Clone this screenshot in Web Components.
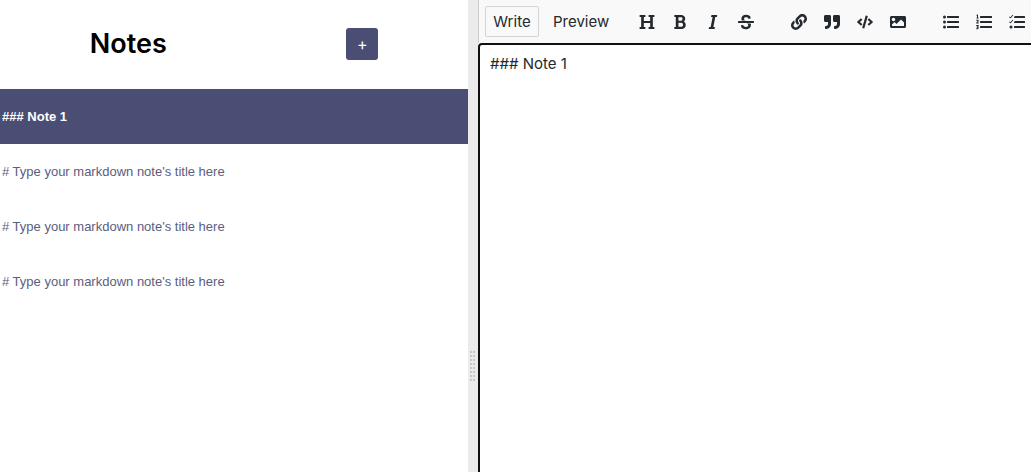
<!DOCTYPE html>
<html lang="en">
<head>
<meta charset="utf-8">
<title>Notes</title>
<style>
  html, body { height: 100%; margin: 0; }
  body { font-family: Inter, "Liberation Sans", sans-serif; background: #fff; color: #000; overflow: hidden; }
</style>
</head>
<body>
<notes-app></notes-app>
<script>
const define = (name, html, setup) => {
  const template = document.createElement('template');
  template.innerHTML = html;
  customElements.define(name, class extends HTMLElement {
    connectedCallback() {
      if (this.shadowRoot) return;
      this.attachShadow({ mode: 'open' }).append(template.content.cloneNode(true));
      if (setup) setup(this, this.shadowRoot);
    }
  });
};

const ICONS = {
  heading: ['0 0 512 512', 'M496 80V48c0-8.837-7.163-16-16-16H320c-8.837 0-16 7.163-16 16v32c0 8.837 7.163 16 16 16h37.621v128H154.379V96H192c8.837 0 16-7.163 16-16V48c0-8.837-7.163-16-16-16H32c-8.837 0-16 7.163-16 16v32c0 8.837 7.163 16 16 16h37.275v320H32c-8.837 0-16 7.163-16 16v32c0 8.837 7.163 16 16 16h160c8.837 0 16-7.163 16-16v-32c0-8.837-7.163-16-16-16h-37.621V288H357.62v128H320c-8.837 0-16 7.163-16 16v32c0 8.837 7.163 16 16 16h160c8.837 0 16-7.163 16-16v-32c0-8.837-7.163-16-16-16h-37.621V96H480c8.837 0 16-7.163 16-16z'],
  bold: ['0 0 384 512', 'M304.793 243.891c33.639-18.537 53.657-54.16 53.657-95.693 0-48.236-26.25-87.626-68.626-104.179C265.138 34.01 240.849 32 209.661 32H24c-8.837 0-16 7.163-16 16v33.049c0 8.837 7.163 16 16 16h33.113v318.53H24c-8.837 0-16 7.163-16 16V464c0 8.837 7.163 16 16 16h195.69c24.203 0 44.834-1.289 66.866-7.584C337.52 457.193 376 410.647 376 350.014c0-52.168-26.573-91.684-71.207-106.123zM142.217 100.809h67.444c16.294 0 27.536 2.019 37.525 6.717 15.828 8.479 24.906 26.502 24.906 49.446 0 35.029-20.32 56.79-53.029 56.79h-76.846V100.809zm112.642 305.475c-10.14 4.056-22.677 4.907-31.409 4.907h-81.233V281.943h84.367c39.645 0 63.057 25.38 63.057 63.551.001 28.425-13.66 52.483-34.782 60.79z'],
  italic: ['0 0 320 512', 'M204.758 416h-33.849l62.092-320h40.725a16 16 0 0 0 15.704-12.937l6.242-32C297.599 41.184 290.034 32 279.968 32H120.235a16 16 0 0 0-15.704 12.937l-6.242 32C96.362 86.816 103.927 96 113.993 96h33.846l-62.09 320H46.278a16 16 0 0 0-15.704 12.935l-6.245 32C22.402 470.815 29.967 480 40.034 480h158.479a16 16 0 0 0 15.704-12.935l6.245-32c1.927-9.88-5.638-19.065-15.704-19.065z'],
  strikethrough: ['0 0 512 512', 'M496 288H16c-8.837 0-16-7.163-16-16v-32c0-8.837 7.163-16 16-16h480c8.837 0 16 7.163 16 16v32c0 8.837-7.163 16-16 16zm-214.666 16c27.258 12.937 46.524 28.683 46.524 56.243 0 33.108-28.977 53.676-75.621 53.676-32.325 0-76.874-12.08-76.874-44.271V368c0-8.837-7.164-16-16-16H113.75c-8.836 0-16 7.163-16 16v19.204c0 66.845 77.717 101.82 154.487 101.82 88.578 0 162.013-45.438 162.013-134.424 0-19.815-3.618-36.417-10.143-50.6H281.334zm-30.952-96c-32.422-13.505-56.836-28.946-56.836-59.683 0-33.92 30.901-47.406 64.962-47.406 42.647 0 64.962 16.593 64.962 32.985V136c0 8.837 7.163 16 16 16h45.613c8.836 0 16-7.163 16-16v-30.318c0-52.438-71.725-79.875-142.575-79.875-85.203 0-150.726 40.972-150.726 125.646 0 22.71 4.665 41.176 12.777 56.547h129.823z'],
  link: ['0 0 512 512', 'M326.612 185.391c59.747 59.809 58.927 155.698.36 214.59-.11.12-.24.25-.36.37l-67.2 67.2c-59.27 59.27-155.699 59.262-214.96 0-59.27-59.26-59.27-155.7 0-214.96l37.106-37.106c9.84-9.84 26.786-3.3 27.294 10.606.648 17.722 3.826 35.527 9.69 52.721 1.986 5.822.567 12.262-3.783 16.612l-13.087 13.087c-28.026 28.026-28.905 73.66-1.155 101.96 28.024 28.579 74.086 28.749 102.325.51l67.2-67.19c28.191-28.191 28.073-73.757 0-101.83-3.701-3.694-7.429-6.564-10.341-8.569a16.037 16.037 0 0 1-6.947-12.606c-.396-10.567 3.348-21.456 11.698-29.806l21.054-21.055c5.521-5.521 14.182-6.199 20.584-1.731a152.482 152.482 0 0 1 20.522 17.197zM467.547 44.449c-59.261-59.262-155.69-59.27-214.96 0l-67.2 67.2c-.12.12-.25.25-.36.37-58.566 58.892-59.387 154.781.36 214.59a152.454 152.454 0 0 0 20.521 17.196c6.402 4.468 15.064 3.789 20.584-1.731l21.054-21.055c8.35-8.35 12.094-19.239 11.698-29.806a16.037 16.037 0 0 0-6.947-12.606c-2.912-2.005-6.64-4.875-10.341-8.569-28.073-28.073-28.191-73.639 0-101.83l67.2-67.19c28.239-28.239 74.3-28.069 102.325.51 27.75 28.3 26.872 73.934-1.155 101.96l-13.087 13.087c-4.35 4.35-5.769 10.79-3.783 16.612 5.864 17.194 9.042 34.999 9.69 52.721.509 13.906 17.454 20.446 27.294 10.606l37.106-37.106c59.271-59.259 59.271-155.699.001-214.959z'],
  quote: ['0 0 512 512', 'M464 32H336c-26.5 0-48 21.5-48 48v128c0 26.5 21.5 48 48 48h80v64c0 35.3-28.7 64-64 64h-8c-13.3 0-24 10.7-24 24v48c0 13.3 10.7 24 24 24h8c88.4 0 160-71.6 160-160V80c0-26.5-21.5-48-48-48zm-288 0H48C21.5 32 0 53.5 0 80v128c0 26.5 21.5 48 48 48h80v64c0 35.3-28.7 64-64 64h-8c-13.3 0-24 10.7-24 24v48c0 13.3 10.7 24 24 24h8c88.4 0 160-71.6 160-160V80c0-26.5-21.5-48-48-48z'],
  code: ['0 0 640 512', 'M278.9 511.5l-61-17.7c-6.4-1.8-10-8.5-8.2-14.9L346.2 8.7c1.8-6.4 8.5-10 14.9-8.2l61 17.7c6.4 1.8 10 8.5 8.2 14.9L293.8 503.3c-1.9 6.4-8.5 10.1-14.9 8.2zm-114-112.2l43.5-46.4c4.6-4.9 4.3-12.7-.8-17.2L117 256l90.6-79.7c5.1-4.5 5.5-12.3.8-17.2l-43.5-46.4c-4.5-4.8-12.1-5.1-17-.5L3.8 247.2c-5.1 4.7-5.1 12.8 0 17.5l144.1 135.1c4.9 4.6 12.5 4.4 17-.5zm327.2.6l144.1-135.1c5.1-4.7 5.1-12.8 0-17.5L492.1 112.1c-4.8-4.5-12.4-4.3-17 .5L431.6 159c-4.6 4.9-4.3 12.7.8 17.2L523 256l-90.6 79.7c-5.1 4.5-5.5 12.3-.8 17.2l43.5 46.4c4.5 4.9 12.1 5.1 17 .6z'],
  image: ['0 0 512 512', 'M464 448H48c-26.51 0-48-21.49-48-48V112c0-26.51 21.49-48 48-48h416c26.51 0 48 21.49 48 48v288c0 26.51-21.49 48-48 48zM112 120c-30.928 0-56 25.072-56 56s25.072 56 56 56 56-25.072 56-56-25.072-56-56-56zM64 384h384V272l-87.515-87.515c-4.686-4.686-12.284-4.686-16.971 0L208 320l-55.515-55.515c-4.686-4.686-12.284-4.686-16.971 0L64 336v48z'],
  bullets: ['0 0 512 512', 'M48 48a48 48 0 1 0 0 96 48 48 0 0 0 0-96zm0 160a48 48 0 1 0 0 96 48 48 0 0 0 0-96zm0 160a48 48 0 1 0 0 96 48 48 0 0 0 0-96zM144 64h352q16 0 16 16v32q0 16-16 16H144q-16 0-16-16V80q0-16 16-16zm0 160h352q16 0 16 16v32q0 16-16 16H144q-16 0-16-16v-32q0-16 16-16zm0 160h352q16 0 16 16v32q0 16-16 16H144q-16 0-16-16v-32q0-16 16-16z'],
  numbers: ['0 0 512 512', 'M16 32l24-16h24v96h16v32H16v-32h16V52H16zM8 184h64q16 0 16 16v24l-38 48h38v32H8v-28l42-54v-6H8zM8 352h80v28l-22 26q22 10 22 34 0 48-48 48H8v-32h32q12 0 12-10 0-14-16-14H20v-22l22-26H8zM144 64h352q16 0 16 16v32q0 16-16 16H144q-16 0-16-16V80q0-16 16-16zm0 160h352q16 0 16 16v32q0 16-16 16H144q-16 0-16-16v-32q0-16 16-16zm0 160h352q16 0 16 16v32q0 16-16 16H144q-16 0-16-16v-32q0-16 16-16z'],
  tasks: ['0 0 512 512', 'M139 40l-72 80-18 16q-6 5-12 0L0 98l20-22 26 24 70-80zm0 160l-72 80-18 16q-6 5-12 0L0 258l20-22 26 24 70-80zM64 368a48 48 0 1 0 0 96 48 48 0 0 0 0-96zM192 64h304q16 0 16 16v32q0 16-16 16H176q-16 0-16-16V96zm0 160h304q16 0 16 16v32q0 16-16 16H176q-16 0-16-16v-16zm-16 160h320q16 0 16 16v32q0 16-16 16H176q-16 0-16-16v-32q0-16 16-16z']
};

define('tool-button', `
  <style>
    :host { display: block; flex: none; }
    button { display: flex; align-items: center; justify-content: center; width: 33px; height: 32px; padding: 0; border: 0; background: none; color: #24292e; cursor: pointer; }
    svg { display: block; width: 16px; height: 16px; fill: currentColor; }
  </style>
  <button type="button"><svg aria-hidden="true"><path/></svg></button>`,
  (host, root) => {
    const [box, path] = ICONS[host.getAttribute('icon')];
    root.querySelector('button').setAttribute('aria-label', host.getAttribute('icon'));
    root.querySelector('svg').setAttribute('viewBox', box);
    root.querySelector('path').setAttribute('d', path);
  });

define('tool-group', `
  <style>:host { display: flex; flex: none; margin-left: 20px; }</style>
  <slot></slot>`);

define('mode-tab', `
  <style>
    :host { display: block; flex: none; }
    button { min-width: 54px; height: 31px; padding: 0 6px; border: 1px solid transparent; border-radius: 2px; background: none; font: 15px/28px Inter, sans-serif; color: #24292e; cursor: pointer; }
    :host([selected]) button { border-color: #d1d5da; }
  </style>
  <button type="button"><slot></slot></button>`);

define('note-item', `
  <style>
    :host { display: block; }
    button { display: block; width: 100%; height: 55px; padding: 0 2px; border: 0; background: none; color: #5a5e7e; font: 13px/20px "Liberation Sans", sans-serif; text-align: left; white-space: nowrap; cursor: pointer; }
    :host([selected]) button { background: #4a4e74; color: #fff; font-weight: 700; }
  </style>
  <button type="button"><slot></slot></button>`);

define('note-sidebar', `
  <style>
    :host { display: block; min-width: 0; background: #fff; }
    header { display: flex; align-items: center; justify-content: space-around; height: 89px; box-sizing: border-box; padding-bottom: 2px; }
    h1 { margin: 0; font-size: 27px; line-height: 36px; font-weight: 600; }
    header button { width: 32px; height: 32px; padding: 0; border: 0; border-radius: 3px; background: #4a4e74; color: #fff; font: 16px/32px Inter, sans-serif; cursor: pointer; }
  </style>
  <header><h1>Notes</h1><button type="button" aria-label="New note">+</button></header>
  <nav aria-label="Notes">
    <note-item selected>### Note 1</note-item>
    <note-item># Type your markdown note's title here</note-item>
    <note-item># Type your markdown note's title here</note-item>
    <note-item># Type your markdown note's title here</note-item>
  </nav>`);

define('split-gutter', `
  <style>
    :host { display: flex; justify-content: center; align-items: flex-start; padding-top: 350px; background: #ebebeb; cursor: col-resize; }
    svg { display: block; }
  </style>
  <svg width="6" height="32" aria-hidden="true">
    <defs><pattern id="grip" width="3" height="4" patternUnits="userSpaceOnUse"><path d="M0 1h2v2H0z" fill="#c8c8c8"/></pattern></defs>
    <rect width="6" height="32" fill="url(#grip)"/>
  </svg>`);

define('note-editor', `
  <style>
    :host { display: flex; flex-direction: column; min-width: 0; overflow: hidden; background: #fff; }
    .bar { display: flex; align-items: center; flex: none; height: 43px; padding-left: 6px; border-left: 1px solid #c8ccd0; background: #f9f9f9; box-sizing: border-box; }
    .tabs { display: flex; flex: none; gap: 7px; margin-right: -6px; }
    textarea { flex: 1; min-height: 0; box-sizing: border-box; width: calc(100% + 6px); margin: 0; padding: 7px 10px; border: 2px solid #101010; border-bottom: 0; border-radius: 4px 4px 0 0; outline: 0; resize: none; background: #fff; color: #24292e; font: 15px/24px Inter, sans-serif; }
  </style>
  <div class="bar">
    <div class="tabs"><mode-tab selected>Write</mode-tab><mode-tab>Preview</mode-tab></div>
    <tool-group><tool-button icon="heading"></tool-button><tool-button icon="bold"></tool-button><tool-button icon="italic"></tool-button><tool-button icon="strikethrough"></tool-button></tool-group>
    <tool-group><tool-button icon="link"></tool-button><tool-button icon="quote"></tool-button><tool-button icon="code"></tool-button><tool-button icon="image"></tool-button></tool-group>
    <tool-group><tool-button icon="bullets"></tool-button><tool-button icon="numbers"></tool-button><tool-button icon="tasks"></tool-button></tool-group>
  </div>
  <textarea aria-label="Note text" spellcheck="false">### Note 1</textarea>`);

define('notes-app', `
  <style>:host { display: grid; grid-template-columns: 468fr 10px 553fr; height: 100vh; }</style>
  <note-sidebar></note-sidebar><split-gutter></split-gutter><note-editor></note-editor>`);
</script>
</body>
</html>
